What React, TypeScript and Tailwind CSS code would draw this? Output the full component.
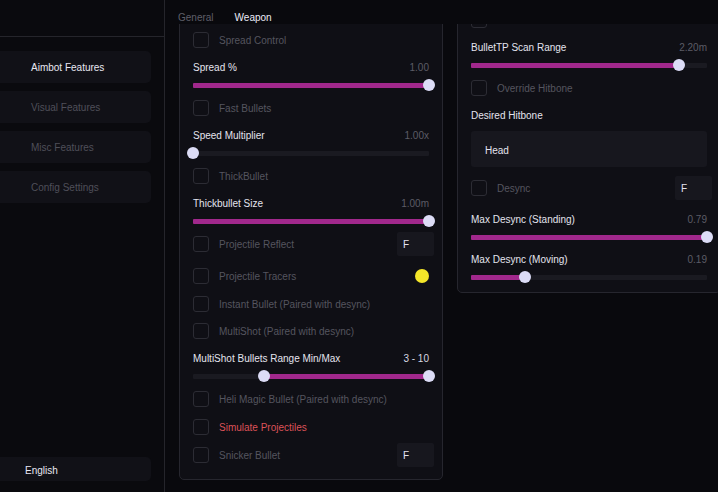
import React from "react";

const FONT = "font-['Liberation_Sans',sans-serif]";

function Checkbox() {
  return <div className="w-[16px] h-[16px] shrink-0 rounded-[3px] border border-[#2c2c34]" />;
}

function CheckRow({
  label,
  h = "h-[28px]",
  tone = "text-[#55555f]",
  extra,
  className = "",
}: {
  label: string;
  h?: string;
  tone?: string;
  extra?: React.ReactNode;
  className?: string;
}) {
  return (
    <div className={`${h} flex items-center ${className}`}>
      <Checkbox />
      <span className={`ml-[10px] translate-y-[1px] ${tone}`}>{label}</span>
      <div className="flex-1" />
      {extra}
    </div>
  );
}

function KeyBox() {
  return (
    <div className="w-[37px] h-[24px] -mr-[5px] bg-[#17171e] rounded-[2px] flex items-center pl-[6px] text-[#e4e4ee]">
      <span className="translate-y-[1px]">F</span>
    </div>
  );
}

function Slider({
  label,
  value,
  from = 0,
  to,
  valueTone = "text-[#5c5c66]",
}: {
  label: string;
  value: string;
  from?: number;
  to: number;
  valueTone?: string;
}) {
  const thumbs = from > 0 ? [from, to] : [to];
  return (
    <div className="pt-[6px] pb-[3px]">
      <div className="h-[14px] flex items-center justify-between translate-y-[1px]">
        <span className="text-[#e4e4ee]">{label}</span>
        <span className={valueTone}>{value}</span>
      </div>
      <div className="relative h-[12px] mt-[5px] flex items-center">
        <div className="relative w-full h-[5px] bg-[#1a1a21] rounded-[1px]">
          <div
            className="absolute top-0 h-[5px] bg-[#a1288c] rounded-[1px]"
            style={{ left: `${from * 100}%`, width: `${(to - from) * 100}%` }}
          />
        </div>
        {thumbs.map((t, i) => (
          <div
            key={i}
            className="absolute top-0 w-[12px] h-[12px] rounded-full bg-[#dcdcf6]"
            style={{ left: `calc(${t * 100}% - 6px)` }}
          />
        ))}
      </div>
    </div>
  );
}

function SideButton({ label, active }: { label: string; active?: boolean }) {
  return (
    <div
      className={`h-[32px] -ml-[8px] w-[159px] rounded-[5px] bg-[#111117] flex items-center pl-[39px] ${
        active ? "text-[#e8e8f2]" : "text-[#4f4f59]"
      }`}
    >
      <span className="translate-y-[1px]">{label}</span>
    </div>
  );
}

export default function App() {
  return (
    <div className={`w-[718px] h-[492px] flex bg-[#09090d] overflow-hidden text-[10px] leading-none ${FONT}`}>
      <aside className="w-[165px] shrink-0 flex flex-col bg-[#0a0a0e] border-r border-[#25252b]">
        <div className="h-[37px] shrink-0 border-b border-[#25252b]" />
        <div className="flex flex-col gap-[8px] pt-[14px]">
          <SideButton label="Aimbot Features" active />
          <SideButton label="Visual Features" />
          <SideButton label="Misc Features" />
          <SideButton label="Config Settings" />
        </div>
        <div className="flex-1" />
        <div className="mb-[11px] h-[24px] -ml-[8px] w-[159px] rounded-[5px] bg-[#111117] flex items-center pl-[33px] text-[#e8e8f2]">
          <span className="translate-y-[2px]">English</span>
        </div>
      </aside>

      <main className="flex-1 flex flex-col min-w-0">
        <div className="h-[24px] shrink-0 flex items-center pt-[9px] pl-[13px] gap-[21px] bg-[#09090d]">
          <span className="text-[#5f5f69] translate-y-[1px]">General</span>
          <span className="text-[#ececf8] translate-y-[1px]">Weapon</span>
        </div>
        <div className="flex-1 overflow-hidden">
          <div className="-mt-[30px] pl-[14px] flex items-start gap-[14px]">
            <section className="w-[264px] shrink-0 bg-[#0f0f15] border border-[#26262e] rounded-[5px] px-[13px] pt-[31px] pb-[10px] flex flex-col">
              <CheckRow label="Spread Control" />
              <Slider label="Spread %" value="1.00" to={1} />
              <CheckRow label="Fast Bullets" />
              <Slider label="Speed Multiplier" value="1.00x" to={0} />
              <CheckRow label="ThickBullet" />
              <Slider label="Thickbullet Size" value="1.00m" to={1} />
              <CheckRow label="Projectile Reflect" className="mb-[4px]" extra={<KeyBox />} />
              <CheckRow
                label="Projectile Tracers"
                extra={<div className="w-[14px] h-[14px] rounded-full bg-[#f4e629]" />}
              />
              <CheckRow label="Instant Bullet (Paired with desync)" h="h-[27px]" />
              <CheckRow label="MultiShot (Paired with desync)" />
              <Slider
                label="MultiShot Bullets Range Min/Max"
                value="3 - 10"
                from={0.3}
                to={1}
                valueTone="text-[#d8d8e2]"
              />
              <CheckRow label="Heli Magic Bullet (Paired with desync)" />
              <CheckRow label="Simulate Projectiles" tone="text-[#dc5258]" />
              <CheckRow label="Snicker Bullet" extra={<KeyBox />} />
            </section>

            <section className="w-[264px] shrink-0 bg-[#0f0f15] border border-[#26262e] rounded-[5px] px-[13px] pt-[11px] pb-[6px] flex flex-col">
              <CheckRow label="BulletTP" />
              <Slider label="BulletTP Scan Range" value="2.20m" to={0.88} />
              <CheckRow label="Override Hitbone" />
              <div className="pt-[6px] h-[20px] flex items-center">
                <span className="text-[#e4e4ee] translate-y-[1px]">Desired Hitbone</span>
              </div>
              <div className="mt-[9px] h-[36px] bg-[#17171e] rounded-[3px] flex items-center pl-[14px] text-[#e4e4ee]">
                <span className="translate-y-[2px]">Head</span>
              </div>
              <CheckRow label="Desync" className="mt-[7px]" extra={<KeyBox />} />
              <div className="mt-[4px]">
                <Slider label="Max Desync (Standing)" value="0.79" to={1} />
              </div>
              <Slider label="Max Desync (Moving)" value="0.19" to={0.23} />
            </section>
          </div>
        </div>
      </main>
    </div>
  );
}
